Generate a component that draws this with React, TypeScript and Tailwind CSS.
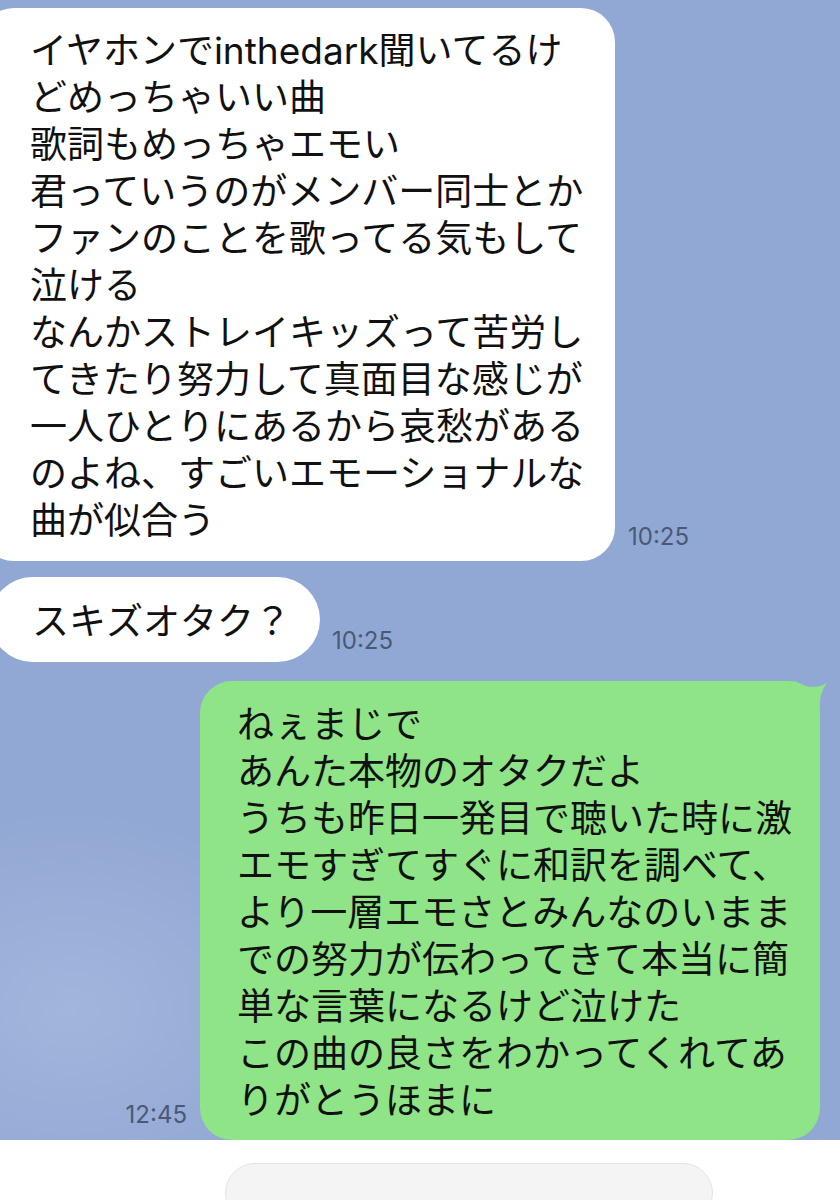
import React from 'react';

// Inter first so Latin reads like the phone font and lines stay 47px apart;
// kana/kanji fall through to Noto CJK.
const FONT = 'Inter, "Noto Sans CJK JP", sans-serif';
const TIME_FONT = 'Inter, "Noto Sans", sans-serif';

const first = [
  'イヤホンでinthedark聞いてるけ',
  'どめっちゃいい曲',
  '歌詞もめっちゃエモい',
  '君っていうのがメンバー同士とか',
  'ファンのことを歌ってる気もして',
  '泣ける',
  'なんかストレイキッズって苦労し',
  'てきたり努力して真面目な感じが',
  '一人ひとりにあるから哀愁がある',
  'のよね、すごいエモーショナルな',
  '曲が似合う',
];

const mine = [
  'ねぇまじで',
  'あんた本物のオタクだよ',
  'うちも昨日一発目で聴いた時に激',
  'エモすぎてすぐに和訳を調べて、',
  'より一層エモさとみんなのいまま',
  'での努力が伝わってきて本当に簡',
  '単な言葉になるけど泣けた',
  'この曲の良さをわかってくれてあ',
  'りがとうほまに',
];

// --- helpers ---
function Lines({ lines }: { lines: string[] }) {
  return (
    <>
      {lines.map((l, i) => (
        <div key={i} className="whitespace-nowrap">
          {l}
        </div>
      ))}
    </>
  );
}

function Time({ t, className = '' }: { t: string; className?: string }) {
  return (
    <span
      className={`text-[24px] leading-[24px] text-[#4a5976] ${className}`}
      style={{ fontFamily: TIME_FONT }}
    >
      {t}
    </span>
  );
}

const App: React.FC = () => {
  return (
    <div
      className="w-[840px] h-[1200px] overflow-hidden flex flex-col bg-white"
      style={{ fontFamily: FONT }}
    >
      <main className="h-[1162px] flex flex-col pt-[8px] bg-[#91a8d4] bg-[radial-gradient(ellipse_260px_200px_at_70px_1010px,#a2b6dc_0%,#91a8d4_100%)]">
        {/* incoming, long */}
        <div className="flex items-end">
          <div className="-ml-[20px] w-[635px] bg-white rounded-[34px] pl-[50px] pt-[19px] pb-[17px] text-[37px] leading-[47px] text-[#111]">
            <Lines lines={first} />
          </div>
          <Time t="10:25" className="ml-[13px] mb-[12px]" />
        </div>

        {/* incoming, short */}
        <div className="flex items-end mt-[16px]">
          <div className="-ml-[10px] w-[330px] h-[85px] bg-white rounded-full pl-[42px] pt-[21px] text-[37px] leading-[47px] text-[#111]">
            スキズオタク？
          </div>
          <Time t="10:25" className="ml-[12px] mb-[9px]" />
        </div>

        {/* outgoing */}
        <div className="flex items-end justify-end mt-[19px] pr-[20px]">
          <Time t="12:45" className="mr-[13px] mb-[13px]" />
          <div className="relative w-[620px] bg-[#8ee486] rounded-[32px] pl-[37px] pt-[20px] pb-[16px] text-[37px] leading-[47px] text-[#111]">
            <svg
              className="absolute -right-[10px] top-0"
              width="40"
              height="32"
              viewBox="0 0 40 32"
            >
              <path d="M5 0 Q22 11 37 2 Q28 13 30 32 L5 32 Z" fill="#8ee486" />
            </svg>
            <div className="relative">
              <Lines lines={mine} />
            </div>
          </div>
        </div>
      </main>

      <footer className="flex-1 bg-white pl-[225px] pt-[23px]">
        <div className="w-[488px] h-[60px] rounded-full bg-[#f4f4f4] border border-[#e4e4e4]" />
      </footer>
    </div>
  );
};

export default App;
